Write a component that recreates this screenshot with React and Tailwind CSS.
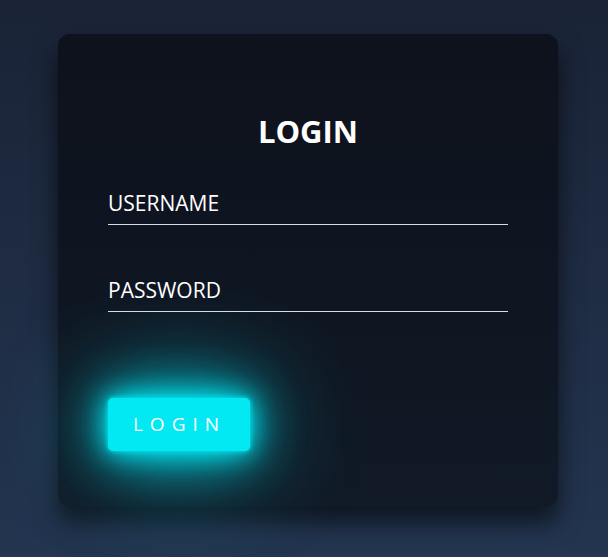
export default function App() {
  const font = { fontFamily: '"Comic Sans MS", "Open Sans", sans-serif' };
  return (
    <div
      className="w-[608px] h-[557px] bg-gradient-to-b from-[#1a2336] to-[#233550] pl-[58px] pt-[34px]"
      style={font}
    >
      <div className="w-[500px] h-[473px] rounded-[12px] bg-black/50 shadow-[0_15px_25px_rgba(0,0,0,0.6)] px-[50px] pt-[78px]">
        <h2 className="text-center text-white font-bold text-[31px] leading-[38px] m-0">LOGIN</h2>
        <div className="mt-[25px] h-[50px] border-b border-[#d8dde3] flex items-center pt-[8px]">
          <span className="text-white text-[21px]">USERNAME</span>
        </div>
        <div className="mt-[37px] h-[50px] border-b border-[#d8dde3] flex items-center pt-[8px]">
          <span className="text-white text-[21px]">PASSWORD</span>
        </div>
        <button
          className="mt-[86px] w-[142px] h-[53px] rounded-[5px] bg-[#03e9f4] text-white text-[19px] tracking-[7px] pl-[1px] flex items-center justify-center shadow-[0_0_5px_#03e9f4,0_0_25px_#03e9f4,0_0_50px_#03e9f4,0_0_100px_#03e9f4]"
          style={font}
        >
          LOGIN
        </button>
      </div>
    </div>
  );
}
